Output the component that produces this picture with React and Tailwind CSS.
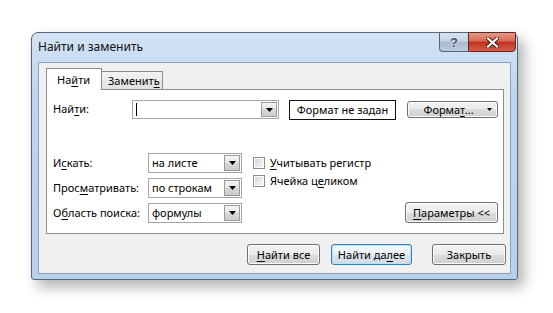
import React from 'react';

function U({ children }) {
  return <span className="underline underline-offset-[2px] decoration-[1px]">{children}</span>;
}

function Arrow() {
  return (
    <svg width="7" height="4" viewBox="0 0 7 4">
      <path d="M0 0h7L3.5 4z" fill="#000" />
    </svg>
  );
}

function DropBtn() {
  return (
    <div className="w-[16px] self-stretch m-[1px] ml-0 flex items-center justify-center border border-[#9a9a9a] bg-[linear-gradient(#f3f3f3_0%,#e6e6e6_50%,#d6d6d6_50%,#cdcdcd_100%)]">
      <Arrow />
    </div>
  );
}

function Select({ value }) {
  return (
    <div className="w-[94px] h-[20px] flex border border-[#a5a5a5] bg-white">
      <div className="flex-1 pl-[3px] leading-[18px]">{value}</div>
      <DropBtn />
    </div>
  );
}

function Checkbox({ children }) {
  return (
    <div className="flex items-center h-[13px]">
      <div className="w-[12px] h-[12px] border border-[#8f8f8f] bg-white p-[1px]">
        <div className="w-full h-full bg-[linear-gradient(135deg,#d6d6d6,#f7f7f7)]" />
      </div>
      <span className="ml-[5px] leading-[14px]">{children}</span>
    </div>
  );
}

function Btn({ children, className = '', focus = false }) {
  return (
    <div
      className={
        'flex items-center justify-center rounded-[3px] border leading-[14px] ' +
        (focus
          ? 'border-[#3c7fb1] shadow-[inset_0_0_0_1px_#b7e3fa] bg-[linear-gradient(#f4f8fb_0%,#eaf1f6_50%,#dde6ee_50%,#d2dce5_100%)] '
          : 'border-[#707070] shadow-[inset_0_0_0_1px_#fcfcfc] bg-[linear-gradient(#f2f2f2_0%,#ebebeb_50%,#dddddd_50%,#cfcfcf_100%)] ') +
        className
      }
    >
      {children}
    </div>
  );
}

export default function App() {
  return (
    <div className="w-[553px] h-[313px] bg-white pt-[32px] pl-[31px] font-['Noto_Sans',sans-serif] text-[11px] text-black overflow-hidden">
      <div className="w-[487px] h-[248px] flex flex-col rounded-t-[7px] rounded-b-[3px] border border-[#56667e] bg-[linear-gradient(180deg,#d3e3f4_0%,#bfd5ed_25%,#b9d0ea_100%)] shadow-[6px_7px_14px_rgba(0,0,0,0.3)]">
        {/* title bar */}
        <div className="h-[29px] shrink-0 flex items-start justify-between">
          <div className="pl-[6px] pt-[6px] leading-[16px] text-[12px] text-[#111]">Найти и заменить</div>
          <div className="flex mr-[1px] mt-[-1px]">
            <div className="w-[29px] h-[20px] rounded-bl-[4px] border border-[#56657a] border-r-0 bg-[linear-gradient(#d9e3ee_0%,#c5d3e3_45%,#a9bbd1_50%,#bccbdd_100%)] flex items-center justify-center">
              <span className="font-['Liberation_Sans',sans-serif] font-bold text-[13px] leading-[13px] text-[#3b4a5e] [text-shadow:0_0_2px_#fff,0_0_1px_#fff]">?</span>
            </div>
            <div className="w-[48px] h-[20px] rounded-br-[4px] border border-[#5a2a26] bg-[linear-gradient(#e79786_0%,#d96a56_45%,#c22e1c_50%,#d0604a_100%)] flex items-center justify-center">
              <svg width="13" height="11" viewBox="0 0 13 11">
                <path d="M2 1.5L11 9.5M11 1.5L2 9.5" stroke="#4a1a14" strokeWidth="4" strokeLinecap="square" />
                <path d="M2 1.5L11 9.5M11 1.5L2 9.5" stroke="#fff" strokeWidth="2.2" strokeLinecap="square" />
              </svg>
            </div>
          </div>
        </div>

        {/* client area */}
        <div className="flex-1 mx-[6px] mb-[5px] border border-[#8da2bd] bg-[#f0f0f0] pt-[5px] pl-[7px] flex flex-col">
          {/* tabs */}
          <div className="flex items-end h-[21px]">
            <div className="relative z-10 -mb-[1px] w-[56px] h-[22px] bg-white border border-b-0 border-[#898c95] pl-[10px] leading-[21px]">
              На<U>й</U>ти
            </div>
            <div className="w-[61px] h-[18px] border border-l-0 border-b-0 border-[#898c95] bg-[linear-gradient(#f3f3f3,#e1e1e1)] pl-[6px] leading-[17px]">
              Заменит<U>ь</U>
            </div>
          </div>

          {/* panel */}
          <div className="w-[458px] h-[145px] border border-[#898c95] bg-white flex flex-col">
            <div className="mt-[9px] h-[21px] flex items-center pl-[6px] pr-[5px]">
              <div className="w-[79px]">
                Най<U>т</U>и:
              </div>
              <div className="w-[147px] h-[19px] flex border border-[#a5a5a5] bg-white">
                <div className="flex-1 flex items-center pl-[3px]">
                  <div className="w-[1px] h-[13px] bg-black" />
                </div>
                <DropBtn />
              </div>
              <div className="ml-[10px] w-[107px] h-[20px] border-[1.5px] border-[#111] flex items-center justify-center leading-[14px]">
                Формат не задан
              </div>
              <Btn className="ml-auto w-[91px] h-[17px] relative">
                <span className="mr-[8px]">
                  Форма<U>т</U>...
                </span>
                <svg className="absolute right-[5px] top-[6px]" width="5" height="3" viewBox="0 0 5 3">
                  <path d="M0 0h5L2.5 3z" fill="#000" />
                </svg>
              </Btn>
            </div>

            <div className="mt-[33px] flex pl-[6px] pr-[5px]">
              <div className="grid grid-cols-[95px_94px] gap-y-[5px] items-center">
                <div>
                  И<U>с</U>кать:
                </div>
                <Select value="на листе" />
                <div>
                  Прос<U>м</U>атривать:
                </div>
                <Select value="по строкам" />
                <div>
                  О<U>б</U>ласть поиска:
                </div>
                <Select value="формулы" />
              </div>
              <div className="ml-[11px] pt-[3px] flex flex-col gap-[5px]">
                <Checkbox>
                  <U>У</U>читывать регистр
                </Checkbox>
                <Checkbox>
                  Ячейка ц<U>е</U>ликом
                </Checkbox>
              </div>
              <Btn className="ml-auto self-end w-[93px] h-[21px]">
                <span>
                  <U>П</U>араметры &lt;&lt;
                </span>
              </Btn>
            </div>
          </div>

          {/* bottom buttons */}
          <div className="mt-[10px] flex justify-end pr-[4px]">
            <Btn className="w-[73px] h-[21px]">
              <span>
                <U>Н</U>айти все
              </span>
            </Btn>
            <Btn focus className="ml-[11px] w-[81px] h-[21px]">
              <span>
                Найти да<U>л</U>ее
              </span>
            </Btn>
            <Btn className="ml-[20px] w-[74px] h-[21px]">
              <span>Закрыть</span>
            </Btn>
          </div>
        </div>
      </div>
    </div>
  );
}
